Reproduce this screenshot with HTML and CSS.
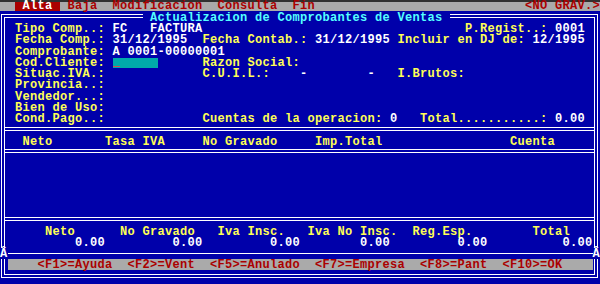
FILE: index.html
```html
<!DOCTYPE html>
<html lang="es">

<head>
    <meta charset="UTF-8">
    <meta name="viewport" content="width=device-width, initial-scale=1.0">
    <title>Comprobantes de Ventas</title>
    <link rel="stylesheet" href="styles.css">
</head>

<body>
    <div class="screen">
        <div class="menubar">
            <span class="menu">  <span class="active"> Alta </span> Baja  Modificacion  Consulta  Fin</span>
            <span class="mode">&lt;NO GRAV.&gt;</span>
        </div>

        <div class="window">
            <div class="title"> Actualizacion de Comprobantes de Ventas </div>

            <div class="head">
                <div class="row"><span class="lbl">Tipo Comp..:</span> FC   FACTURA                                   <span class="lbl">P.Regist..:</span> 0001</div>
                <div class="row"><span class="lbl">Fecha Comp.:</span> 31/12/1995  <span class="lbl">Fecha Contab.:</span> 31/12/1995 <span class="lbl">Incluir en DJ de:</span> 12/1995</div>
                <div class="row"><span class="lbl">Comprobante:</span> A 0001-00000001</div>
                <div class="row"><span class="lbl">Cod.Cliente:</span> <span class="field"><span class="cursor"></span></span>      <span class="lbl">Razon Social:</span></div>
                <div class="row"><span class="lbl">Situac.IVA.:</span>             <span class="lbl">C.U.I.L.:</span>    -        -   <span class="lbl">I.Brutos:</span></div>
                <div class="row"><span class="lbl">Provincia..:</span></div>
                <div class="row"><span class="lbl">Vendedor...:</span></div>
                <div class="row"><span class="lbl">Bien de Uso:</span></div>
                <div class="row"><span class="lbl">Cond.Pago..:</span>             <span class="lbl">Cuentas de la operacion:</span> 0   <span class="lbl">Total...........:</span> 0.00</div>
            </div>

            <div class="sep"></div>
            <div class="row lbl"> Neto       Tasa IVA     No Gravado     Imp.Total                 Cuenta</div>
            <div class="sep"></div>

            <div class="list"></div>

            <div class="sep"></div>
            <div class="row lbl">    Neto      No Gravado   Iva Insc.   Iva No Insc.  Reg.Esp.        Total</div>
            <div class="row">        0.00         0.00         0.00        0.00         0.00          0.00</div>
        </div>

        <div class="break">
            <span class="mark">Â</span>
            <span class="rule"></span>
            <span class="mark">Â</span>
        </div>

        <div class="window-foot">
            <div class="keys">    &lt;F1&gt;=Ayuda  &lt;F2&gt;=Vent  &lt;F5&gt;=Anulado  &lt;F7&gt;=Empresa  &lt;F8&gt;=Pant  &lt;F10&gt;=OK</div>
        </div>
    </div>
</body>

</html>
```

FILE: styles.css
```css
body {
    margin: 0;
    padding: 0;
    background-color: #0000aa;
    color: #ffffff;
    font-family: "Liberation Mono", "DejaVu Sans Mono", monospace;
    font-size: 12px;
    font-weight: bold;
    letter-spacing: 0.3px;
    line-height: 11.26px;
}

.screen {
    width: 600px;
    height: 284px;
    overflow: hidden;
}

/* top menu */
.menubar {
    display: flex;
    justify-content: space-between;
    height: 11.26px;
    box-sizing: border-box;
    border-top: 2px solid #303030;
    background-color: #aaaaaa;
    color: #aa0000;
    line-height: 9.26px;
}

.menu,
.mode {
    white-space: pre;
}

.active {
    display: inline-block;
    height: 9.26px;
    vertical-align: top;
    background-color: #aa0000;
    color: #ffffff;
}

/* main frame */
.window {
    position: relative;
    width: 597px;
    margin: 2.74px 0 0 1px;
    box-sizing: border-box;
    border: 4px double #ffffff;
    border-bottom: none;
    padding-top: 4.52px;
}

.title {
    position: absolute;
    left: 137.5px;
    top: -6.74px;
    height: 11.26px;
    box-sizing: border-box;
    padding-top: 1.5px;
    background-color: #0000aa;
    color: #55ffff;
    white-space: pre;
}

.row {
    height: 11.26px;
    box-sizing: border-box;
    padding-left: 10px;
    padding-top: 1.5px;
    white-space: pre;
}

.lbl {
    color: #ffff55;
}

.field {
    display: inline-block;
    width: 45px;
    height: 9.76px;
    vertical-align: top;
    background-color: #00aaaa;
}

.cursor {
    display: block;
    width: 7.5px;
    height: 1.6px;
    margin-top: 8.1px;
    background-color: #d05050;
}

.sep {
    height: 11.26px;
    box-sizing: border-box;
    padding-top: 3px;
}

.sep::before {
    content: "";
    display: block;
    border-top: 4px double #ffffff;
}

.list {
    height: 56.3px;
}

/* broken line above the key bar */
.break {
    display: flex;
    height: 11.26px;
}

.mark {
    width: 7.5px;
    height: 11.26px;
    box-sizing: border-box;
    padding-top: 1.5px;
    white-space: pre;
}

.rule {
    flex: 1;
    height: 1px;
    margin-top: 5px;
    background-color: #ffffff;
}

.window-foot {
    width: 597px;
    margin-left: 1px;
    box-sizing: border-box;
    border: 4px double #ffffff;
    border-top: none;
    padding: 0 1.5px 4px 2.5px;
}

.keys {
    height: 11.26px;
    box-sizing: border-box;
    padding-top: 1.5px;
    background-color: #aaaaaa;
    color: #aa0000;
    white-space: pre;
}
```
